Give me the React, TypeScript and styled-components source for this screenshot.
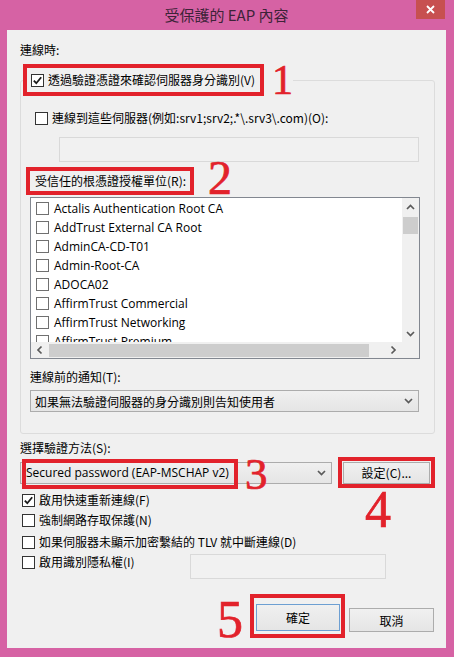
import React, { FC } from "react";
import styled, { createGlobalStyle } from "styled-components";

const GlobalStyle = createGlobalStyle`
  html, body { margin: 0; padding: 0; }
  body {
    font-family: "Noto Sans CJK TC", "Noto Sans", sans-serif;
    font-size: 12px;
    color: #000;
  }
`;

const certs = [
  "Actalis Authentication Root CA",
  "AddTrust External CA Root",
  "AdminCA-CD-T01",
  "Admin-Root-CA",
  "ADOCA02",
  "AffirmTrust Commercial",
  "AffirmTrust Networking",
  "AffirmTrust Premium",
];

function App() {
  return (
    <>
      <GlobalStyle />
      <Window>
        <TitleBar>
          <Title>受保護的 EAP 內容</Title>
          <CloseButton>
            <svg width="9" height="9" viewBox="0 0 9 9">
              <path d="M1 1 L8 8 M8 1 L1 8" stroke="#fff" strokeWidth="1.8" />
            </svg>
          </CloseButton>
        </TitleBar>

        <Panel>
          <Label>連線時:</Label>

          <Group>
            <GroupLegend>
              <LegendRow>
                <Mark $pad="0 5px 0 4px" $h={32}>
                  <CheckRow>
                    <CheckBox checked />
                    <span>透過驗證憑證來確認伺服器身分識別(V)</span>
                  </CheckRow>
                </Mark>
                <Digit $size={42} $gap={8}>1</Digit>
              </LegendRow>
            </GroupLegend>

            <GroupBody>
              <CheckRow $indent={5} $top={9}>
                <CheckBox />
                <span>連線到這些伺服器(例如:srv1;srv2;.*\.srv3\.com)(O):</span>
              </CheckRow>
              <TextField $left={29} $top={11} />

              <LabelRow>
                <Mark $pad="0 4px 0 5px" $h={28}>
                  受信任的根憑證授權單位(R):
                </Mark>
                <Digit $size={48} $gap={14} $lift={6}>2</Digit>
              </LabelRow>

              <ListBox>
                <ListViewport>
                  {certs.map((c) => (
                    <ListItem key={c}>
                      <CheckBox light />
                      <span>{c}</span>
                    </ListItem>
                  ))}
                </ListViewport>
                <VScroll>
                  <ArrowCell>
                    <Chevron rotate={180} />
                  </ArrowCell>
                  <VThumb />
                  <Spacer />
                  <ArrowCell>
                    <Chevron />
                  </ArrowCell>
                </VScroll>
                <HScroll>
                  <ArrowCell>
                    <Chevron rotate={90} />
                  </ArrowCell>
                  <HThumb />
                  <Spacer />
                  <ArrowCell>
                    <Chevron rotate={-90} />
                  </ArrowCell>
                </HScroll>
                <Corner />
              </ListBox>

              <Label $top={10}>連線前的通知(T):</Label>
              <Select $top={5} $padLeft={4}>
                <span>如果無法驗證伺服器的身分識別則告知使用者</span>
                <Chevron />
              </Select>
            </GroupBody>
          </Group>

          <Label $top={6}>選擇驗證方法(S):</Label>
          <AuthRow>
            <Select $width={312} $padLeft={5} $latin>
              <span>Secured password (EAP-MSCHAP v2)</span>
              <Chevron />
              <OverlayMark />
              <OverlayDigit $size={45}>3</OverlayDigit>
            </Select>
            <SettingsWrap>
              <Mark $pad="1px" $h={31}>
                <Button $width={87} $height={22}>設定(C)...</Button>
              </Mark>
              <OverlayDigit $size={52} $left={27} $topOffset={27}>4</OverlayDigit>
            </SettingsWrap>
          </AuthRow>

          <Options>
            <CheckRow $indent={2} $height={20}>
              <CheckBox checked />
              <span>啟用快速重新連線(F)</span>
            </CheckRow>
            <CheckRow $indent={2} $height={20}>
              <CheckBox />
              <span>強制網路存取保護(N)</span>
            </CheckRow>
            <CheckRow $indent={2} $height={20} $top={2}>
              <CheckBox />
              <span>如果伺服器未顯示加密繫結的 TLV 就中斷連線(D)</span>
            </CheckRow>
            <PrivacyRow>
              <CheckRow $indent={2} $height={20} $width={168}>
                <CheckBox />
                <span>啟用識別隱私權(I)</span>
              </CheckRow>
              <TextField $width={196} $top={2} />
            </PrivacyRow>
          </Options>

          <ButtonRow>
            <Digit $size={52} $gap={0}>5</Digit>
            <Mark $pad="6px 1px 3px 2px" $h={44} $left={7}>
              <Button $width={84} $height={27} $primary>確定</Button>
            </Mark>
            <Button $width={85} $height={24} $top={14} $left={4}>取消</Button>
          </ButtonRow>
        </Panel>
      </Window>
    </>
  );
}

export default App;

const CheckBox: FC<{ checked?: boolean; light?: boolean }> = ({ checked, light }) => (
  <Box $light={light}>
    {checked && (
      <svg width="11" height="11" viewBox="0 0 11 11">
        <path d="M1.8 5.6 L4.3 8.2 L9.2 2.2" fill="none" stroke="#1a1a1a" strokeWidth="1.8" />
      </svg>
    )}
  </Box>
);

const Chevron: FC<{ rotate?: number }> = ({ rotate = 0 }) => (
  <svg width="9" height="6" viewBox="0 0 9 6" style={{ transform: `rotate(${rotate}deg)` }}>
    <path d="M1 1 L4.5 4.5 L8 1" fill="none" stroke="#5a5a5a" strokeWidth="1.7" />
  </svg>
);

const Window = styled.div`
  width: 454px;
  height: 657px;
  box-sizing: border-box;
  background: #d662a4;
  padding: 0 8px 9px 7px;
  display: flex;
  flex-direction: column;
`;

const TitleBar = styled.div`
  height: 30px;
  display: grid;
  grid-template-columns: 1fr auto 1fr;
  flex-shrink: 0;
`;

const Title = styled.div`
  grid-column: 2;
  font-size: 15px;
  line-height: 30px;
  color: #3d2338;
`;

const CloseButton = styled.div`
  grid-column: 3;
  justify-self: end;
  width: 29px;
  height: 19px;
  margin-right: 1px;
  background: #c75050;
  display: flex;
  align-items: center;
  justify-content: center;
`;

const Panel = styled.div`
  flex: 1;
  background: #f0f0f0;
  padding: 12px 11px 0 13px;
  display: flex;
  flex-direction: column;
`;

const Label = styled.div<{ $top?: number }>`
  line-height: 16px;
  margin-top: ${(p) => p.$top || 0}px;
`;

const Group = styled.fieldset`
  margin: 1px 0 0;
  padding: 0 14px 21px 2px;
  border: 1px solid #dcdcdc;
  border-radius: 3px;
  min-width: 0;
`;

const GroupLegend = styled.legend`
  padding: 0;
`;

const LegendRow = styled.div`
  display: flex;
  align-items: center;
`;

const GroupBody = styled.div`
  margin-left: 7px;
  display: flex;
  flex-direction: column;
`;

const Mark = styled.div<{ $pad: string; $h: number; $left?: number }>`
  display: inline-flex;
  align-items: center;
  box-sizing: border-box;
  height: ${(p) => p.$h}px;
  border: 4px solid #e2222b;
  padding: ${(p) => p.$pad};
  margin-left: ${(p) => p.$left || 0}px;
  line-height: 16px;
`;

const Digit = styled.div<{ $size: number; $gap: number; $lift?: number }>`
  font-family: "Liberation Serif", serif;
  font-size: ${(p) => p.$size}px;
  line-height: 1;
  color: #e2222b;
  -webkit-text-stroke: 0.7px #e2222b;
  margin-left: ${(p) => p.$gap}px;
  margin-bottom: ${(p) => p.$lift || 0}px;
`;

const CheckRow = styled.div<{ $indent?: number; $top?: number; $height?: number; $width?: number }>`
  display: flex;
  align-items: center;
  gap: 4px;
  line-height: 16px;
  height: ${(p) => (p.$height ? `${p.$height}px` : "auto")};
  width: ${(p) => (p.$width ? `${p.$width}px` : "auto")};
  margin-left: ${(p) => p.$indent || 0}px;
  margin-top: ${(p) => p.$top || 0}px;
  white-space: nowrap;
`;

const Box = styled.span<{ $light?: boolean }>`
  width: 13px;
  height: 13px;
  box-sizing: border-box;
  border: 1px solid ${(p) => (p.$light ? "#707070" : "#333")};
  background: #fff;
  display: flex;
  align-items: center;
  justify-content: center;
  flex-shrink: 0;
`;

const TextField = styled.div<{ $left?: number; $top?: number; $width?: number }>`
  height: 25px;
  box-sizing: border-box;
  border: 1px solid #d9d9d9;
  background: #f1f1f1;
  margin-left: ${(p) => p.$left || 0}px;
  margin-top: ${(p) => p.$top || 0}px;
  width: ${(p) => (p.$width ? `${p.$width}px` : "auto")};
  margin-right: ${(p) => (p.$width ? 0 : 1)}px;
`;

const LabelRow = styled.div`
  display: flex;
  align-items: center;
  margin: 5px 0 0 -4px;
  height: 28px;
`;

const ListBox = styled.div`
  margin-top: 2px;
  height: 162px;
  box-sizing: border-box;
  border: 1px solid #828790;
  background: #fff;
  display: grid;
  grid-template-columns: 1fr 17px;
  grid-template-rows: 1fr 16px;
  overflow: hidden;
`;

const ListViewport = styled.div`
  overflow: hidden;
  padding-top: 1px;
`;

const ListItem = styled.div`
  height: 19px;
  display: flex;
  align-items: center;
  gap: 5px;
  padding-left: 5px;
  font-family: "Open Sans", "Noto Sans", sans-serif;
  font-size: 12px;
  white-space: nowrap;
`;

const VScroll = styled.div`
  background: #f0f0f0;
  display: flex;
  flex-direction: column;
  align-items: center;
`;

const HScroll = styled.div`
  background: #f0f0f0;
  display: flex;
  align-items: center;
`;

const Corner = styled.div`
  background: #f0f0f0;
`;

const ArrowCell = styled.div`
  width: 17px;
  height: 17px;
  display: flex;
  align-items: center;
  justify-content: center;
  flex-shrink: 0;
`;

const VThumb = styled.div`
  width: 15px;
  height: 17px;
  margin-top: 2px;
  background: #cdcdcd;
`;

const HThumb = styled.div`
  width: 320px;
  height: 13px;
  margin-left: 1px;
  background: #cdcdcd;
`;

const Spacer = styled.div`
  flex: 1;
`;

const Select = styled.div<{ $top?: number; $width?: number; $padLeft: number; $latin?: boolean }>`
  position: relative;
  height: 22px;
  box-sizing: border-box;
  width: ${(p) => (p.$width ? `${p.$width}px` : "auto")};
  margin-top: ${(p) => p.$top || 0}px;
  margin-right: ${(p) => (p.$width ? 0 : 1)}px;
  border: 1px solid #acacac;
  background: linear-gradient(#f0f0f0, #e5e5e5);
  display: flex;
  align-items: center;
  justify-content: space-between;
  padding: 0 5px 0 ${(p) => p.$padLeft}px;
  font-family: ${(p) =>
    p.$latin ? `"Open Sans", "Noto Sans", sans-serif` : `"Noto Sans CJK TC", sans-serif`};
  font-size: 12px;
  white-space: nowrap;
`;

const OverlayMark = styled.div`
  position: absolute;
  left: 1px;
  top: -4px;
  width: 216px;
  height: 30px;
  box-sizing: border-box;
  border: 4px solid #e2222b;
`;

const OverlayDigit = styled.div<{ $size: number; $left?: number; $topOffset?: number }>`
  position: absolute;
  left: ${(p) => (p.$left !== undefined ? p.$left : 224)}px;
  top: ${(p) => (p.$topOffset !== undefined ? p.$topOffset : -11)}px;
  font-family: "Liberation Serif", serif;
  font-size: ${(p) => p.$size}px;
  line-height: 1;
  color: #e2222b;
  -webkit-text-stroke: 0.7px #e2222b;
`;

const AuthRow = styled.div`
  display: flex;
  align-items: center;
  margin-top: 1px;
`;

const SettingsWrap = styled.div`
  position: relative;
  margin-left: 6px;
  display: flex;
`;

const Button = styled.div<{ $width: number; $height: number; $primary?: boolean; $top?: number; $left?: number }>`
  width: ${(p) => p.$width}px;
  height: ${(p) => p.$height}px;
  box-sizing: border-box;
  margin-top: ${(p) => p.$top || 0}px;
  margin-left: ${(p) => p.$left || 0}px;
  border: 1px solid ${(p) => (p.$primary ? "#6d9fd2" : "#acacac")};
  background: linear-gradient(#f0f0f0, #e5e5e5);
  display: flex;
  align-items: center;
  justify-content: center;
  font-size: 12px;
`;

const Options = styled.div`
  margin-top: 2px;
  display: flex;
  flex-direction: column;
`;

const PrivacyRow = styled.div`
  display: flex;
  align-items: flex-start;
`;

const ButtonRow = styled.div`
  display: flex;
  align-items: flex-start;
  justify-content: flex-end;
  margin: 15px 1px 0 0;
`;
